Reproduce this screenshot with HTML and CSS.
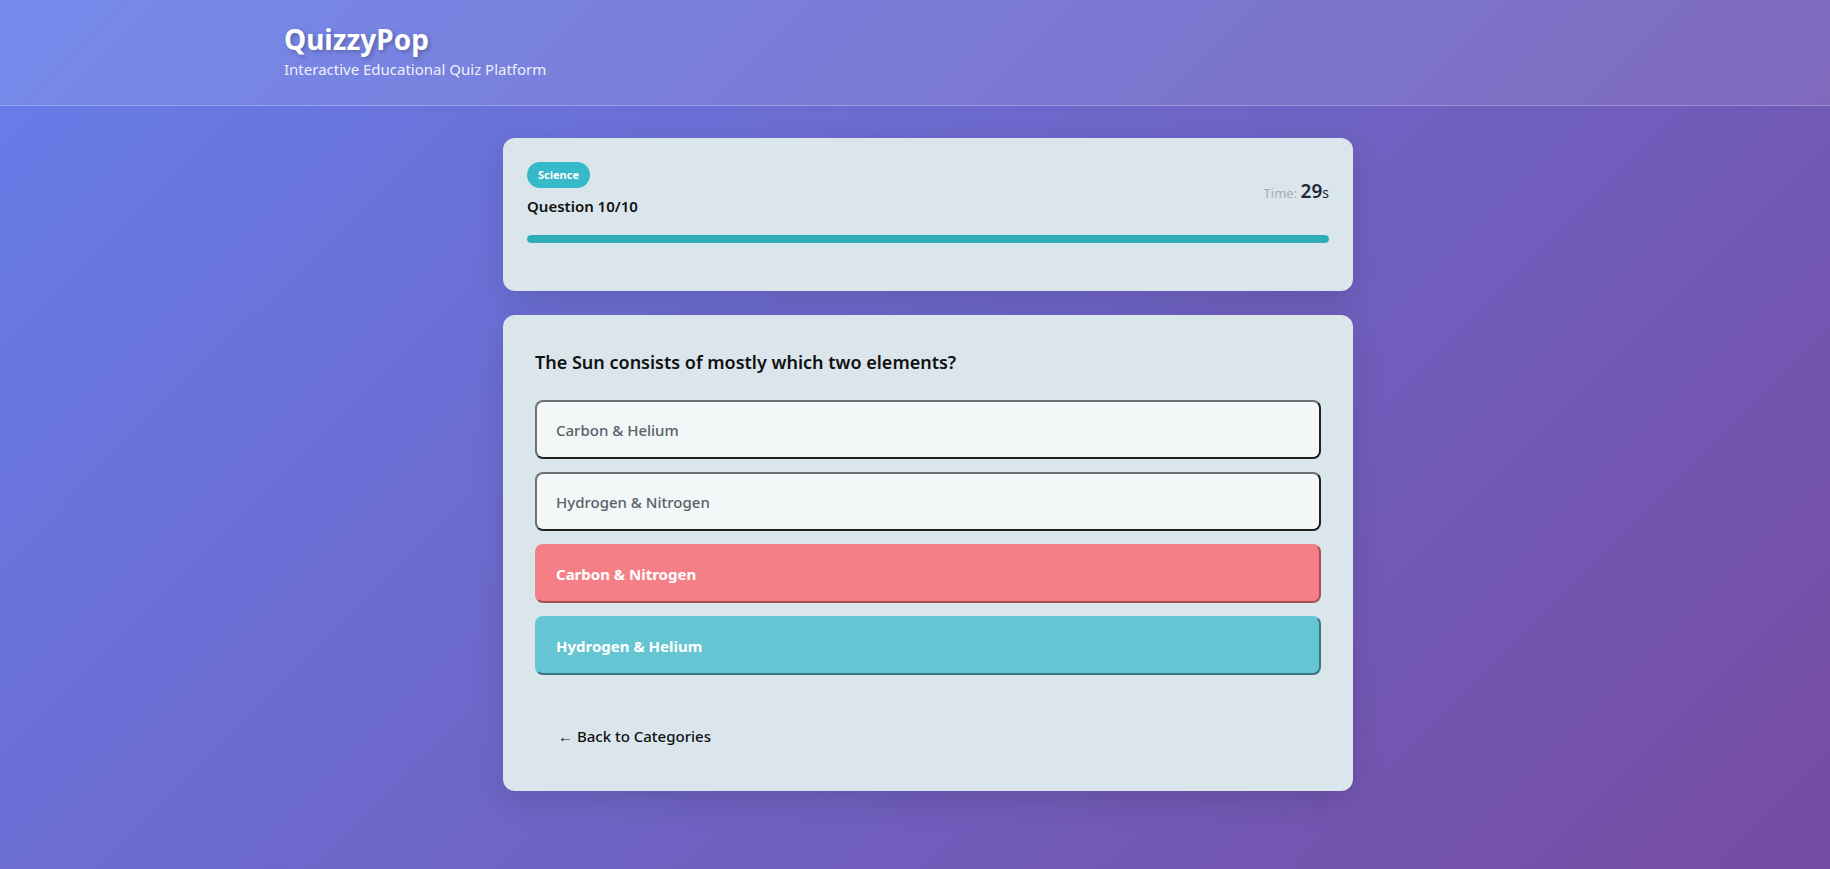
FILE: index.html
```html
<!DOCTYPE html>
<html lang="en">
<head>
<meta charset="utf-8">
<title>QuizzyPop</title>
<link rel="stylesheet" href="styles.css">
</head>
<body>
<header class="site-header">
  <div class="header-inner">
    <h1 class="brand">QuizzyPop</h1>
    <p class="tagline">Interactive Educational Quiz Platform</p>
  </div>
</header>
<main class="main">
  <section class="card status-card">
    <div class="status-row">
      <div class="status-left">
        <span class="badge">Science</span>
        <div class="q-count">Question 10/10</div>
      </div>
      <div class="timer"><span class="timer-label">Time: </span><span class="timer-value">29</span><span class="timer-unit">s</span></div>
    </div>
    <div class="progress"><div class="progress-fill" style="width:100%"></div></div>
  </section>
  <section class="card question-card">
    <h2 class="question">The Sun consists of mostly which two elements?</h2>
    <div class="options">
      <button class="option">Carbon &amp; Helium</button>
      <button class="option">Hydrogen &amp; Nitrogen</button>
      <button class="option option-wrong">Carbon &amp; Nitrogen</button>
      <button class="option option-right">Hydrogen &amp; Helium</button>
    </div>
    <button class="back">← Back to Categories</button>
  </section>
</main>
</body>
</html>
```
FILE: styles.css
```css
* { box-sizing: border-box; }
html, body { margin: 0; padding: 0; }
body {
  min-height: 869px;
  font-family: "Noto Sans", "Open Sans", sans-serif;
  background: linear-gradient(135deg, #667eea 0%, #764ba2 100%);
  color: #111;
}
.site-header {
  background: rgba(255,255,255,0.1);
  border-bottom: 1px solid rgba(255,255,255,0.25);
  height: 106px;
}
.header-inner {
  max-width: 1262px;
  margin: 0 auto;
  padding-top: 22px;
}
.brand {
  margin: 0;
  font-size: 28px;
  line-height: 34px;
  font-weight: 700;
  color: #fff;
  text-shadow: 2px 2px 4px rgba(0,0,0,0.25);
}
.tagline {
  margin: 3px 0 0;
  font-size: 15px;
  line-height: 20px;
  color: rgba(255,255,255,0.9);
}
.main {
  padding: 32px 0 40px 26px;
  display: flex;
  flex-direction: column;
  align-items: center;
  gap: 24px;
}
.card {
  width: 850px;
  background: #dae6ec;
  border-radius: 12px;
  box-shadow: 0 10px 30px rgba(0,0,0,0.12);
}
.status-card { padding: 24px 24px 48px; }
.status-row {
  display: flex;
  justify-content: space-between;
  align-items: center;
}
.status-left { display: flex; flex-direction: column; align-items: flex-start; }
.badge {
  display: inline-block;
  height: 26px;
  line-height: 26px;
  padding: 0 11px;
  border-radius: 13px;
  background: #36b9c8;
  color: #fff;
  font-size: 11px;
  font-weight: 700;
}
.q-count {
  margin-top: 7px;
  font-size: 15px;
  line-height: 22px;
  font-weight: 600;
  color: #111;
}
.timer { font-size: 13px; color: #a8adb2; padding-top: 2px; }
.timer-value { font-size: 19px; font-weight: 600; color: #1f2937; }
.timer-unit { font-size: 14px; color: #1f2937; }
.progress {
  margin-top: 18px;
  height: 8px;
  border-radius: 4px;
  background: #c9d6dd;
  overflow: hidden;
}
.progress-fill { height: 100%; background: #2eadb9; border-radius: 4px; }
.question-card { padding: 32px; }
.question {
  margin: 0 0 23px;
  font-size: 18px;
  line-height: 30px;
  font-weight: 600;
  color: #111;
}
.options { display: flex; flex-direction: column; gap: 13px; }
.option {
  display: block;
  width: 100%;
  height: 59px;
  padding: 0 19px;
  text-align: left;
  font-family: inherit;
  font-size: 15px;
  font-weight: 500;
  color: #5b6068;
  background: #f3f7f8;
  border: 2px outset #6b7177;
  border-radius: 8px;
}
.option-wrong {
  background: #f57f86;
  border-color: #f57f86;
  color: #fff;
  font-weight: 700;
}
.option-right {
  background: #65c5d2;
  border-color: #65c5d2;
  color: #fff;
  font-weight: 700;
}
.back {
  margin-top: 38px;
  padding: 12px 23px;
  background: transparent;
  border: none;
  font-family: inherit;
  font-size: 15px;
  line-height: 22px;
  font-weight: 500;
  color: #111;
}
```
